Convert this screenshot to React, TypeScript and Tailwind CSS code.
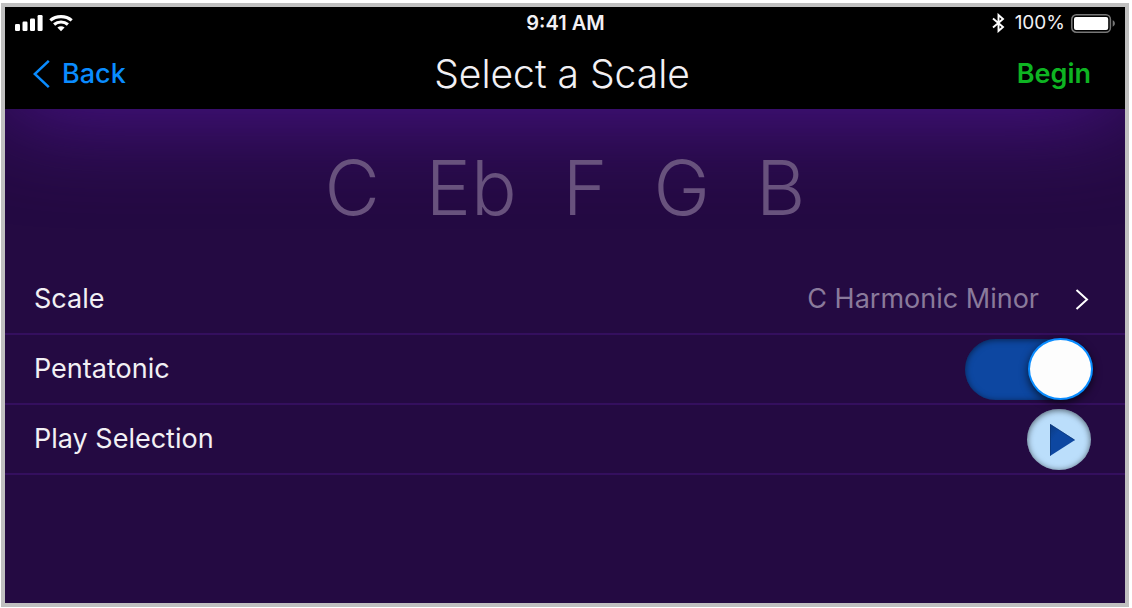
import { useState } from "react";
import type { ReactNode } from "react";

const NOTES = ["C", "Eb", "F", "G", "B"];

function SignalIcon() {
  return (
    <svg width="28" height="17" viewBox="0 0 28 17" fill="#fff" aria-hidden="true">
      <rect x="0" y="9" width="5" height="7" rx="1.2" />
      <rect x="7.5" y="6.5" width="5" height="9.5" rx="1.2" />
      <rect x="15" y="3.5" width="5" height="12.5" rx="1.2" />
      <rect x="22.6" y="0" width="5" height="16" rx="1.2" />
    </svg>
  );
}

function WifiIcon() {
  return (
    <svg width="24" height="17" viewBox="0 0 24 17" fill="none" stroke="#fff" aria-hidden="true">
      <path d="M1.3 5.4C7.3 .3 16.7 .3 22.7 5.4" strokeWidth="3.1" />
      <path d="M5.1 9.5C9 6.1 15 6.1 18.9 9.5" strokeWidth="3.1" />
      <path d="M8.4 12.6C10.5 10.8 13.5 10.8 15.6 12.6L12 16.2Z" fill="#fff" stroke="none" />
    </svg>
  );
}

function BluetoothIcon() {
  return (
    <svg width="13" height="20" viewBox="0 0 13 20" fill="none" stroke="#fff" strokeWidth="1.9" aria-hidden="true">
      <path d="M1 5.5L11 14L6.5 18V2L11 6L1 14.5" />
    </svg>
  );
}

function BatteryIcon() {
  return (
    <svg width="45" height="19" viewBox="0 0 45 19" fill="none" aria-hidden="true">
      <rect x="0.8" y="0.8" width="38.6" height="17.4" rx="4.5" stroke="#777" strokeWidth="1.5" />
      <rect x="3" y="3" width="34.2" height="13" rx="2" fill="#fff" />
      <path d="M41.7 6.3C44.6 7.4 44.6 11.6 41.7 12.7Z" fill="#777" />
    </svg>
  );
}

function Row({ children }: { children: ReactNode }) {
  return (
    <div className="flex h-[70px] items-center justify-between border-b-2 border-[#340f5e] pr-8 pl-[29px]">
      {children}
    </div>
  );
}

export default function App() {
  const [pentatonic, setPentatonic] = useState(true);

  return (
    <div className="flex min-h-screen flex-col bg-white pt-[3px] pr-[3px] pb-px pl-px font-['Inter',sans-serif]">
      <div className="flex grow flex-col overflow-hidden border-4 border-[#c0c0c0] bg-[#240a42] text-[#f2f0f4]">
        <header className="bg-black shadow-[0_0_100px_#501496]">
          <div className="grid h-8 grid-cols-3 items-center pr-[9px] pl-2.5 text-[19px]">
            <div className="flex items-center gap-1.5">
              <SignalIcon />
              <WifiIcon />
            </div>
            <time className="text-center text-[20px] font-semibold">9:41 AM</time>
            <div className="flex items-center justify-end gap-1.5">
              <BluetoothIcon />
              <span className="pl-1">100%</span>
              <BatteryIcon />
            </div>
          </div>
          <nav className="grid h-[70px] grid-cols-[1fr_auto_1fr] items-center pr-[34px] pl-[28px]">
            <button type="button" className="flex items-center gap-3 text-[27px] font-medium text-[#0a8cff]">
              <svg width="17" height="28" viewBox="0 0 17 28" fill="none" stroke="currentColor" strokeWidth="2.5" aria-hidden="true">
                <path d="M15.8 .9L1.8 14L15.8 27.1" />
              </svg>
              Back
            </button>
            <h1 className="text-[39px] font-light">Select a Scale</h1>
            <button type="button" className="justify-self-end text-[27px] font-semibold text-[#0eb422]">
              Begin
            </button>
          </nav>
        </header>

        <main>
          <div className="flex h-[156px] items-center justify-center gap-[46px] text-[76px] font-light text-[#68527d]">
            {NOTES.map((note) => (
              <span key={note}>{note}</span>
            ))}
          </div>

          <div className="text-[27px]">
            <Row>
              <span>Scale</span>
              <button type="button" aria-label="Choose scale, C Harmonic Minor" className="flex items-center gap-9">
                <span className="text-[#8a7a9b]">C Harmonic Minor</span>
                <svg width="18" height="22" viewBox="0 0 18 22" fill="none" stroke="#fff" strokeWidth="2" aria-hidden="true">
                  <path d="M1.5 2L12 11.5L1.5 21" />
                </svg>
              </button>
            </Row>
            <Row>
              <label htmlFor="pentatonic">Pentatonic</label>
              <input
                id="pentatonic"
                type="checkbox"
                role="switch"
                checked={pentatonic}
                onChange={(event) => setPentatonic(event.target.checked)}
                className="flex h-[61px] w-32 cursor-pointer appearance-none items-center rounded-full bg-[#3a2a55] shadow-[inset_0_1px_6px_#0008] before:h-[62px] before:w-[65px] before:shrink-0 before:rounded-[50%] before:border-2 before:border-[#0a8cff] before:bg-[#fdfdfd] before:shadow-[0_3px_8px_#000a] before:content-[''] checked:justify-end checked:bg-[#0d47a1]"
              />
            </Row>
            <Row>
              <span id="play-label">Play Selection</span>
              <button
                type="button"
                aria-labelledby="play-label"
                className="mr-0.5 flex h-[61px] w-16 items-center justify-center rounded-[50%] bg-[#bbdefb] shadow-[inset_0_1px_6px_#0009]"
              >
                <svg width="64" height="61" viewBox="0 0 64 61" aria-hidden="true">
                  <defs>
                    <linearGradient id="play-fill" x1="0" y1="0" x2="1" y2="1">
                      <stop offset="0" stopColor="#0b3a80" />
                      <stop offset=".3" stopColor="#0d47a1" />
                    </linearGradient>
                  </defs>
                  <path d="M23 15L48 31L23 47Z" fill="url(#play-fill)" />
                  <path d="M23.5 46.5V15.5L47.5 31" fill="none" stroke="#0a3575" strokeOpacity=".7" />
                </svg>
              </button>
            </Row>
          </div>
        </main>
      </div>
    </div>
  );
}
